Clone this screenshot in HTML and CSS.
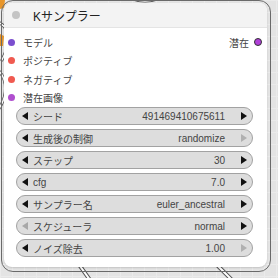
FILE: index.html
```html
<!DOCTYPE html>
<html lang="ja">
<head>
<meta charset="utf-8">
<link rel="stylesheet" href="styles.css">
</head>
<body>
<svg class="links" width="278" height="278" viewBox="0 0 278 278">
  <g fill="none" stroke-linecap="round">
    <path d="M-2 22 C 10 28, 12 40, 2 60" stroke="#555" stroke-width="3"/>
    <path d="M-2 22 C 10 28, 12 40, 2 60" stroke="#fff" stroke-width="1.5"/>
    <path d="M-2 70 C 8 80, 8 96, -2 110" stroke="#555" stroke-width="3"/>
    <path d="M-2 70 C 8 80, 8 96, -2 110" stroke="#fff" stroke-width="1.5"/>
    <path d="M130 -2 C 140 2, 150 2, 160 -2" stroke="#555" stroke-width="3"/>
    <path d="M130 -2 C 140 2, 150 2, 160 -2" stroke="#fff" stroke-width="1.5"/>
    <path d="M80 266 L 90 280" stroke="#555" stroke-width="4"/>
    <path d="M80 266 L 90 280" stroke="#fff" stroke-width="2"/>
    <path d="M218 266 L 232 280" stroke="#555" stroke-width="4"/>
    <path d="M218 266 L 232 280" stroke="#fff" stroke-width="2"/>
  </g>
  <path d="M0 0 L5 0 L4 8 L0 9 Z" fill="#e8962a"/>
  <path d="M0 34 L4 36 L3 46 L0 46 Z" fill="#e8962a"/>
</svg>
<div class="outline">
  <div class="node">
    <div class="header">
      <span class="title-dot"></span>
      <span class="title">Kサンプラー</span>
    </div>
    <div class="slots">
      <div class="slot in"><span class="dot model"></span>モデル</div>
      <div class="slot out">潜在<span class="dot latent"></span></div>
      <div class="slot in"><span class="dot cond"></span>ポジティブ</div>
      <div class="slot empty"></div>
      <div class="slot in"><span class="dot cond"></span>ネガティブ</div>
      <div class="slot empty"></div>
      <div class="slot in"><span class="dot latent-in"></span>潜在画像</div>
      <div class="slot empty"></div>
    </div>
    <div class="widgets">
      <div class="widget"><span class="arrow left"></span><span class="label">シード</span><span class="value">491469410675611</span><span class="arrow right"></span></div>
      <div class="widget"><span class="arrow left"></span><span class="label">生成後の制御</span><span class="value">randomize</span><span class="arrow right off"></span></div>
      <div class="widget"><span class="arrow left"></span><span class="label">ステップ</span><span class="value">30</span><span class="arrow right"></span></div>
      <div class="widget"><span class="arrow left"></span><span class="label">cfg</span><span class="value">7.0</span><span class="arrow right"></span></div>
      <div class="widget"><span class="arrow left"></span><span class="label">サンプラー名</span><span class="value">euler_ancestral</span><span class="arrow right"></span></div>
      <div class="widget"><span class="arrow left off"></span><span class="label">スケジューラ</span><span class="value">normal</span><span class="arrow right"></span></div>
      <div class="widget"><span class="arrow left"></span><span class="label">ノイズ除去</span><span class="value">1.00</span><span class="arrow right off"></span></div>
    </div>
  </div>
</div>
</body>
</html>
```
FILE: styles.css
```css
html, body {
  margin: 0;
  padding: 0;
}
body {
  width: 278px;
  height: 278px;
  overflow: hidden;
  position: relative;
  background-color: #e4e4e4;
  background-image:
    linear-gradient(to right, #ebebeb 1px, transparent 1px),
    linear-gradient(to bottom, #ebebeb 1px, transparent 1px);
  background-size: 12px 12px;
  font-family: "Liberation Sans", "Noto Sans CJK JP", sans-serif;
  color: #333;
}
.links {
  position: absolute;
  left: 0;
  top: 0;
}
.outline {
  position: relative;
  margin: 0 0 0 1px;
  width: 263px;
  padding: 2px 3px 4px 2px;
  border: 1px solid #6a6a6a;
  border-radius: 12px;
}
.node {
  background: #fff;
  border-radius: 8px;
  overflow: hidden;
  box-shadow: 0 1px 2px rgba(0,0,0,0.15);
}
.header {
  height: 25px;
  background: #f3f3f3;
  border-bottom: 1px solid #e4e4e4;
  box-sizing: border-box;
  display: flex;
  align-items: center;
  padding-left: 8px;
}
.title-dot {
  width: 8px;
  height: 8px;
  border-radius: 50%;
  background: #c4c4c4;
  margin-right: 13px;
}
.title {
  font-size: 12px;
  color: #222;
}
.slots {
  display: grid;
  grid-template-columns: 1fr auto;
  grid-auto-rows: 18.5px;
  padding-top: 5px;
  font-size: 10px;
}
.slot {
  display: flex;
  align-items: center;
  color: #444;
}
.slot.in {
  padding-left: 4px;
}
.slot.in .dot {
  margin-right: 8px;
}
.slot.out {
  padding-right: 5px;
  justify-content: flex-end;
}
.slot.out .dot {
  margin-left: 5px;
}
.dot {
  width: 7px;
  height: 7px;
  border-radius: 50%;
  display: inline-block;
  box-sizing: border-box;
}
.dot.model { background: #7b4fcf; }
.dot.cond { background: #f05a50; }
.dot.latent-in { background: #b04fcf; }
.dot.latent { background: #b040d8; border: 1px solid #333; width: 8px; height: 8px; }
.widgets {
  display: flex;
  flex-direction: column;
  gap: 4px;
  padding: 0 14px 10px 12px;
}
.widget {
  height: 18px;
  box-sizing: border-box;
  border: 1px solid #a2a2a2;
  border-radius: 9px;
  background: #dddddd;
  display: flex;
  align-items: center;
  font-size: 10px;
  color: #444;
  padding: 0 5px 0 5px;
}
.arrow {
  width: 0;
  height: 0;
  border-top: 4.5px solid transparent;
  border-bottom: 4.5px solid transparent;
}
.arrow.left {
  border-right: 6px solid #111;
  margin-right: 5px;
}
.arrow.right {
  border-left: 6px solid #111;
  margin-left: 16px;
}
.arrow.left.off { border-right-color: #a8a8a8; }
.arrow.right.off { border-left-color: #b0b0b0; }
.label {
  flex: 1;
  white-space: nowrap;
}
.value {
  white-space: nowrap;
}
```
